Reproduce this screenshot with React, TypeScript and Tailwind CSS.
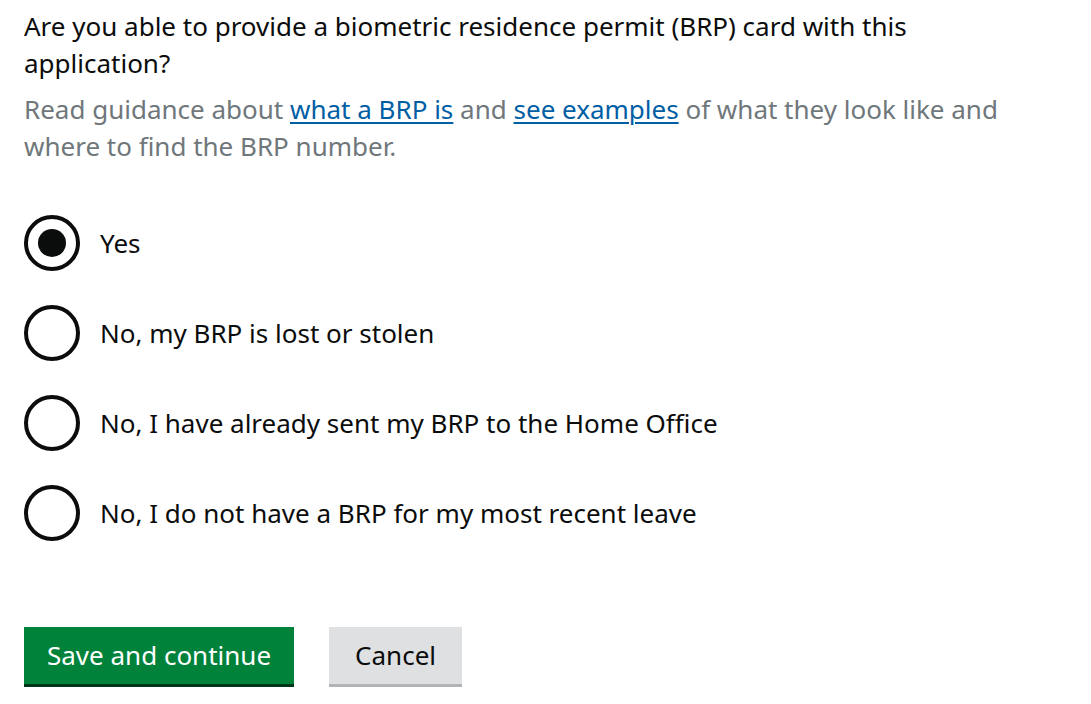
import React, { useState } from 'react';

const options = [
  'Yes',
  'No, my BRP is lost or stolen',
  'No, I have already sent my BRP to the Home Office',
  'No, I do not have a BRP for my most recent leave',
];

export default function App() {
  const [selected, setSelected] = useState(0);

  return (
    <div
      className="min-h-screen bg-white px-[24px] pt-[8px] text-[#0b0c0c]"
      style={{ fontFamily: '"Noto Sans", Arial, sans-serif' }}
    >
      <h1 className="text-[26px] leading-[37px] font-normal max-w-[920px]">
        Are you able to provide a biometric residence permit (BRP) card with this application?
      </h1>
      <p className="mt-[9px] text-[26px] leading-[37px] text-[#6f777b] max-w-[1000px]">
        Read guidance about{' '}
        <a href="#" className="text-[#005ea5] underline underline-offset-[3px] decoration-[2px]">
          what a BRP is
        </a>{' '}
        and{' '}
        <a href="#" className="text-[#005ea5] underline underline-offset-[3px] decoration-[2px]">
          see examples
        </a>{' '}
        of what they look like and where to find the BRP number.
      </p>

      <div className="mt-[50px] flex flex-col gap-[34px]">
        {options.map((label, i) => (
          <label key={label} className="flex items-center gap-[20px] cursor-pointer" onClick={() => setSelected(i)}>
            <span className="w-[56px] h-[56px] rounded-full border-[4px] border-[#0b0c0c] flex items-center justify-center shrink-0">
              {selected === i && <span className="w-[28px] h-[28px] rounded-full bg-[#0b0c0c]" />}
            </span>
            <span className="text-[26px] leading-[37px]">{label}</span>
          </label>
        ))}
      </div>

      <div className="mt-[86px] flex items-start gap-[35px]">
        <button className="h-[57px] px-[23px] bg-[#00823b] text-white text-[26px] shadow-[0_3px_0_#003618]">
          Save and continue
        </button>
        <button className="h-[57px] px-[26px] bg-[#dee0e2] text-[#0b0c0c] text-[26px] shadow-[0_3px_0_#b1b4b6]">
          Cancel
        </button>
      </div>
    </div>
  );
}
